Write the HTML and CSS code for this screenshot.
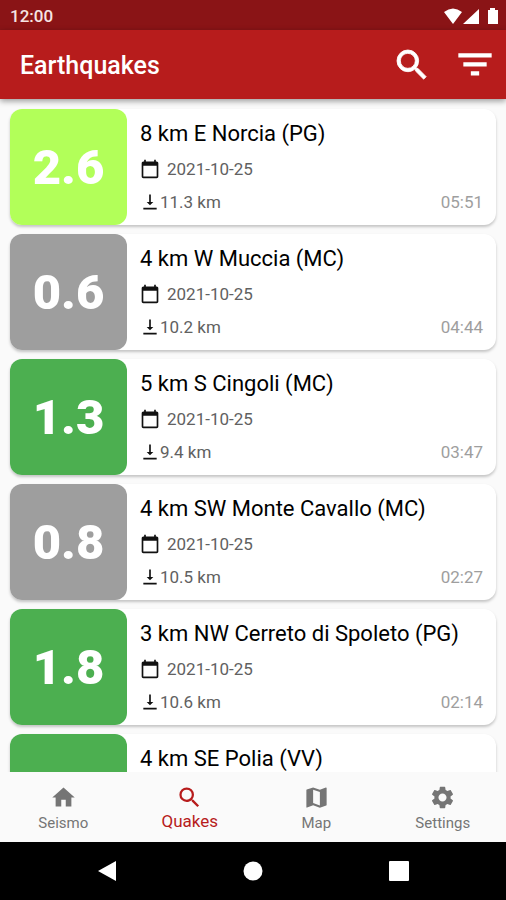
FILE: index.html
```html
<!DOCTYPE html>
<html lang="en">
<head>
    <meta charset="UTF-8">
    <meta name="viewport" content="width=device-width, initial-scale=1.0">
    <title>Earthquakes</title>
    <link rel="stylesheet" href="styles.css">
</head>
<body>
    <svg class="sprite" aria-hidden="true">
        <symbol id="icon-search" viewBox="0 0 24 24">
            <path d="M15.5 14h-.79l-.28-.27A6.47 6.47 0 0 0 16 9.5 6.5 6.5 0 1 0 9.5 16c1.61 0 3.09-.59 4.23-1.57l.27.28v.79l5 4.99L20.49 19l-4.99-5zm-6 0a4.5 4.5 0 1 1 0-9 4.5 4.5 0 0 1 0 9z"/>
        </symbol>
        <symbol id="icon-calendar" viewBox="0 0 24 24">
            <path d="M20 3h-1V1h-2v2H7V1H5v2H4c-1.1 0-2 .9-2 2v16c0 1.1.9 2 2 2h16c1.1 0 2-.9 2-2V5c0-1.1-.9-2-2-2zm0 18H4V8h16v13z"/>
        </symbol>
        <symbol id="icon-depth" viewBox="0 0 24 24">
            <path d="M16 12h-3V3h-2v9H8l4 4 4-4zM4 19v2h16v-2H4z"/>
        </symbol>
    </svg>

    <div class="status-bar">
        <span>12:00</span>
        <svg class="status-icons" viewBox="0 0 56 18" aria-hidden="true">
            <path d="M1 5Q10-2 19 5L10 17zM36 2v15H20zM47 1h5v2h3v14H45V3h2z"/>
        </svg>
    </div>

    <header class="app-bar">
        <h1>Earthquakes</h1>
        <button class="icon-button" aria-label="Search">
            <svg viewBox="0 0 24 24"><use href="#icon-search"/></svg>
        </button>
        <button class="icon-button filter" aria-label="Filter">
            <svg viewBox="0 0 24 24"><path d="M2 5h20v2.500H2zM5 10.400h14v2.500H5zM9.500 15.800h5v2.500h-5z"/></svg>
        </button>
    </header>

    <main class="quakes">
        <article class="quake">
            <div class="magnitude light">2.6</div>
            <div class="details">
                <h2>8 km E Norcia (PG)</h2>
                <div class="date"><svg><use href="#icon-calendar"/></svg>2021-10-25</div>
                <div class="depth"><svg><use href="#icon-depth"/></svg>11.3 km <time>05:51</time></div>
            </div>
        </article>
        <article class="quake">
            <div class="magnitude weak">0.6</div>
            <div class="details">
                <h2>4 km W Muccia (MC)</h2>
                <div class="date"><svg><use href="#icon-calendar"/></svg>2021-10-25</div>
                <div class="depth"><svg><use href="#icon-depth"/></svg>10.2 km <time>04:44</time></div>
            </div>
        </article>
        <article class="quake">
            <div class="magnitude minor">1.3</div>
            <div class="details">
                <h2>5 km S Cingoli (MC)</h2>
                <div class="date"><svg><use href="#icon-calendar"/></svg>2021-10-25</div>
                <div class="depth"><svg><use href="#icon-depth"/></svg>9.4 km <time>03:47</time></div>
            </div>
        </article>
        <article class="quake">
            <div class="magnitude weak">0.8</div>
            <div class="details">
                <h2>4 km SW Monte Cavallo (MC)</h2>
                <div class="date"><svg><use href="#icon-calendar"/></svg>2021-10-25</div>
                <div class="depth"><svg><use href="#icon-depth"/></svg>10.5 km <time>02:27</time></div>
            </div>
        </article>
        <article class="quake">
            <div class="magnitude minor">1.8</div>
            <div class="details">
                <h2>3 km NW Cerreto di Spoleto (PG)</h2>
                <div class="date"><svg><use href="#icon-calendar"/></svg>2021-10-25</div>
                <div class="depth"><svg><use href="#icon-depth"/></svg>10.6 km <time>02:14</time></div>
            </div>
        </article>
        <article class="quake">
            <div class="magnitude minor"></div>
            <div class="details">
                <h2>4 km SE Polia (VV)</h2>
            </div>
        </article>
    </main>

    <nav class="tabs">
        <a href="#seismo">
            <svg viewBox="0 0 24 24"><path d="M10 20v-6h4v6h5v-8h3L12 3 2 12h3v8z"/></svg>
            Seismo
        </a>
        <a href="#quakes" class="active" aria-current="page">
            <svg viewBox="0 0 24 24"><use href="#icon-search"/></svg>
            Quakes
        </a>
        <a href="#map">
            <svg viewBox="0 0 24 24"><path d="M20.500 3l-.16.030L15 5.100 9 3 3.360 4.900c-.21.070-.36.250-.36.480V20.500c0 .28.220.5.500.5l.16-.030L9 18.900l6 2.100 5.640-1.900c.21-.070.360-.25.360-.48V3.500c0-.28-.22-.5-.5-.5zM15 19l-6-2.110V5l6 2.110V19z"/></svg>
            Map
        </a>
        <a href="#settings">
            <svg viewBox="0 0 24 24"><path d="M19.140 12.940c.04-.3.060-.61.060-.94 0-.32-.02-.64-.07-.94l2.030-1.580c.18-.14.230-.41.120-.61l-1.920-3.320c-.12-.22-.37-.29-.59-.22l-2.390.960c-.5-.38-1.030-.7-1.620-.94l-.36-2.540c-.04-.24-.24-.41-.48-.41h-3.840c-.24 0-.43.170-.47.410l-.36 2.540c-.59.240-1.130.570-1.620.940l-2.390-.96c-.22-.08-.47 0-.59.220L2.740 8.870c-.12.210-.08.470.12.610l2.030 1.580c-.05.3-.09.630-.09.940s.02.640.070.940l-2.030 1.580c-.18.140-.23.410-.12.610l1.920 3.320c.12.220.37.290.59.220l2.390-.96c.5.380 1.030.7 1.620.940l.36 2.540c.05.240.240.410.480.410h3.840c.24 0 .44-.17.470-.41l.36-2.540c.59-.24 1.130-.56 1.620-.94l2.390.960c.22.080.470 0 .59-.22l1.920-3.320c.12-.22.070-.47-.12-.61l-2.010-1.580zM12 15.600c-1.980 0-3.600-1.620-3.600-3.600s1.620-3.600 3.600-3.600 3.600 1.620 3.600 3.600-1.620 3.600-3.600 3.600z"/></svg>
            Settings
        </a>
    </nav>

    <div class="system-nav">
        <button aria-label="Back"><svg viewBox="0 0 22 22"><path d="M20 1v20L2 11z"/></svg></button>
        <button aria-label="Home"><svg viewBox="0 0 22 22"><circle cx="11" cy="11" r="9.500"/></svg></button>
        <button aria-label="Recent apps"><svg viewBox="0 0 22 22"><rect x="1" y="1" width="20" height="20" rx="1"/></svg></button>
    </div>
</body>
</html>
```
FILE: styles.css
```css
* {
    box-sizing: border-box;
}
body {
    font-family: Roboto, sans-serif;
    margin: 0;
    height: 100vh;
    display: flex;
    flex-direction: column;
    background-color: #fafafa;
}
svg {
    fill: currentColor;
    flex: none;
}
button {
    display: flex;
    padding: 0;
    border: none;
    background: none;
    color: inherit;
    cursor: pointer;
}
.sprite {
    display: none;
}
.status-bar {
    display: flex;
    justify-content: space-between;
    align-items: center;
    height: 30px;
    padding: 1px 7px 0 10px;
    background-color: #8a1416;
    color: #f6e4e4;
    font-size: 17px;
    font-weight: 500;
    flex: none;
}
.status-icons {
    width: 56px;
    height: 18px;
    color: #fff;
}
.app-bar {
    display: flex;
    align-items: center;
    gap: 23px;
    height: 69px;
    padding: 0 11px 0 20px;
    background-color: #b71c1c;
    color: #fff;
    box-shadow: 0 2px 6px rgba(0, 0, 0, 0.4);
    z-index: 1;
    flex: none;
}
.app-bar h1 {
    flex: 1;
    margin: 0;
    padding-top: 2px;
    font-size: 25px;
    font-weight: 500;
}
.icon-button svg {
    width: 40px;
    height: 40px;
    stroke: currentColor;
    stroke-width: 0.5;
}
.filter svg {
    stroke: none;
}
.quakes {
    flex: 1;
    min-height: 0;
    overflow: hidden;
    display: flex;
    flex-direction: column;
    gap: 9px;
    padding: 10px 10px 0;
}
.quake {
    display: flex;
    flex: none;
    min-height: 116px;
    border-radius: 12px;
    background-color: #fff;
    box-shadow: 0 2px 3px rgba(0, 0, 0, 0.22);
}
.magnitude {
    display: flex;
    align-items: center;
    justify-content: center;
    width: 117px;
    border-radius: 12px;
    color: #fff;
    font-size: 49px;
    font-weight: 900;
    flex: none;
}
.light {
    background-color: #b2ff59;
}
.minor {
    background-color: #4caf50;
}
.weak {
    background-color: #9e9e9e;
}
.details {
    flex: 1;
    padding: 10px 13px 0;
    color: #616161;
    font-size: 17px;
}
.details h2 {
    margin: 0 0 8px;
    color: #000;
    font-size: 22px;
    font-weight: 400;
    line-height: 30px;
}
.date,
.depth {
    display: flex;
    align-items: center;
    height: 24px;
}
.date {
    gap: 7px;
    margin-bottom: 9px;
}
.date svg,
.depth svg {
    width: 20px;
    height: 20px;
    color: #111;
}
.depth time {
    margin-left: auto;
    color: #9e9e9e;
}
.tabs {
    display: grid;
    grid-template-columns: repeat(4, 1fr);
    height: 70px;
    background-color: #fafafa;
    flex: none;
}
.tabs a {
    display: flex;
    flex-direction: column;
    align-items: center;
    gap: 2px;
    padding-top: 12px;
    color: #757575;
    font-size: 15px;
    line-height: 20px;
    text-decoration: none;
}
.tabs svg {
    width: 27px;
    height: 27px;
}
.tabs .active {
    gap: 0;
    color: #b71c1c;
    font-size: 17px;
}
.system-nav {
    display: flex;
    justify-content: space-around;
    align-items: center;
    height: 58px;
    padding: 0 34px;
    background-color: #000;
    color: #fff;
    flex: none;
}
.system-nav svg {
    width: 22px;
    height: 22px;
}
```
